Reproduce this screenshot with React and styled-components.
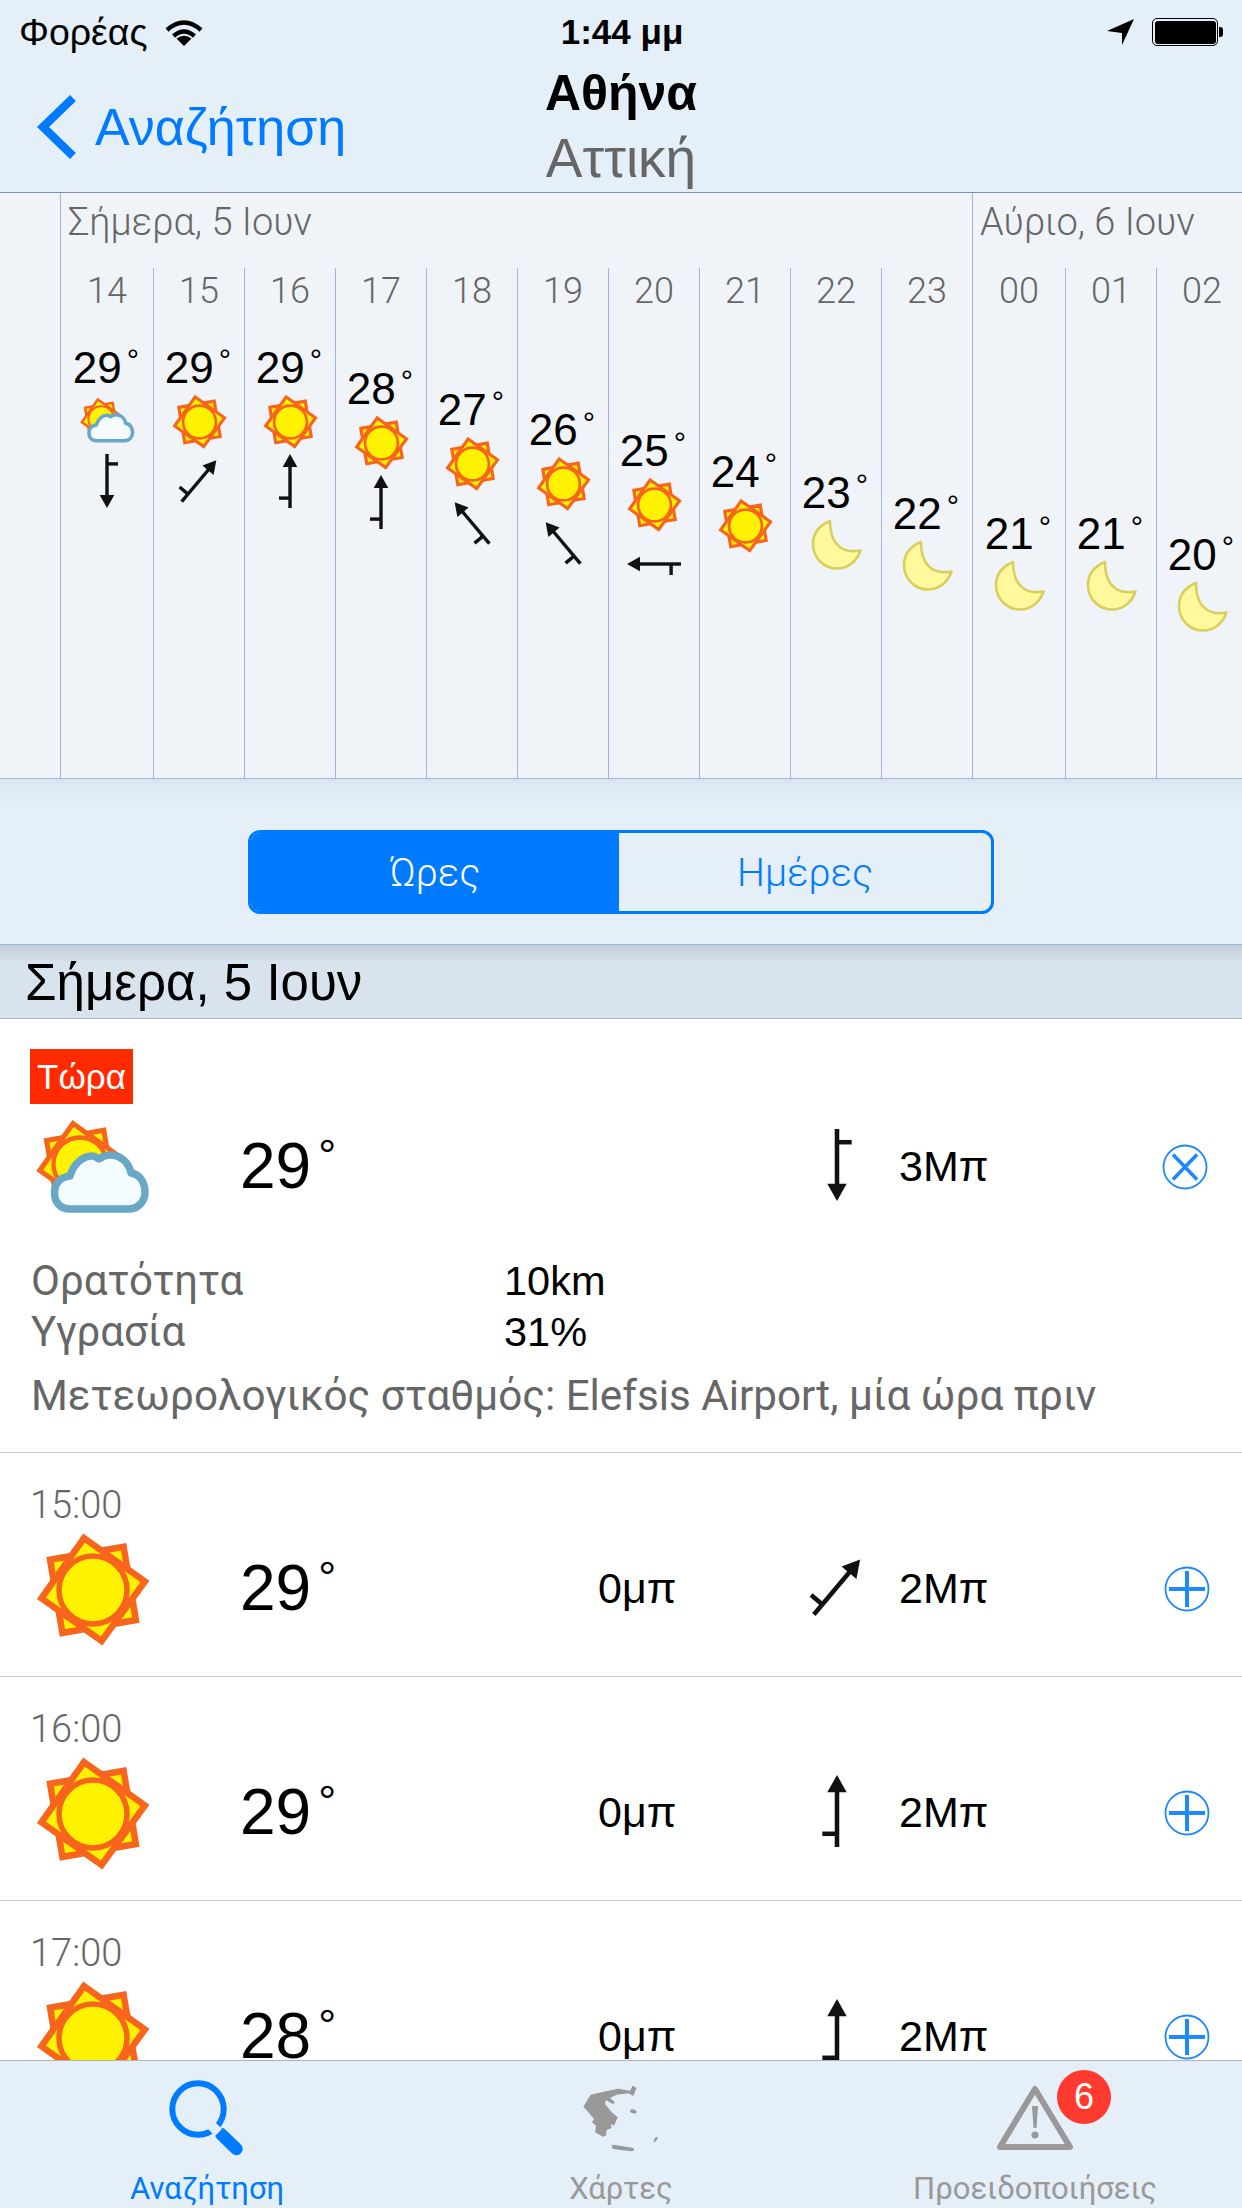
import React from 'react';
import styled, { createGlobalStyle } from 'styled-components';

const SANS = '"Liberation Sans", "Noto Sans", sans-serif';
const LIGHT = 'Roboto, "Liberation Sans", sans-serif';
const BLUE = '#007AFF';
const PALE = '#E5EFF8';
const RULE = '#9DB8D9';

const Global = createGlobalStyle`
  html, body { margin: 0; padding: 0; background: #fff; }
  * { box-sizing: border-box; }
`;

const Screen = styled.div`
  width: 1242px; height: 2208px; overflow: hidden;
  display: flex; flex-direction: column;
  font-family: ${SANS}; color: #000; background: #fff;
`;

/* ---------- header ---------- */
const Header = styled.header`
  flex: none; height: 193px; background: ${PALE};
  border-bottom: 1px solid #7C90AE;
  display: flex; flex-direction: column;
`;
const StatusBar = styled.div`
  height: 64px; padding: 0 17px 0 19px;
  display: grid; grid-template-columns: 1fr auto 1fr; align-items: center;
  font-size: 37.5px; line-height: 64px;
`;
const StatusLeft = styled.div`display: flex; align-items: center; gap: 17px;`;
const StatusTime = styled.div`font-weight: 700; font-size: 35px;`;
const StatusRight = styled.div`display: flex; align-items: center; justify-content: flex-end; gap: 18px;`;
const Battery = styled.div`
  position: relative; width: 66px; height: 28px;
  border: 1.5px solid #000; border-radius: 5px; padding: 1.5px; margin-right: 7px;
  &::before { content: ''; display: block; width: 100%; height: 100%; background: #000; border-radius: 3px; }
  &::after { content: ''; position: absolute; right: -6px; top: 8px; width: 4px; height: 10px; background: #000; border-radius: 0 3px 3px 0; }
`;
const NavBar = styled.nav`
  flex: 1; display: grid; grid-template-columns: 1fr auto 1fr; align-items: start;
`;
const BackLink = styled.div`
  display: flex; align-items: center; gap: 15px; padding: 28px 0 0 36px;
  color: ${BLUE}; font-size: 52px; line-height: 70px;
`;
const TitleBlock = styled.div`
  display: flex; flex-direction: column; align-items: center;
`;
const Title = styled.div`font-size: 50px; font-weight: 700; line-height: 66px; margin-top: -4px;`;
const Subtitle = styled.div`font-size: 55px; line-height: 68px; color: #666; margin-top: -2px;`;

/* ---------- hourly chart ---------- */
const Chart = styled.section`
  flex: none; height: 586px; padding-left: 60px; background: #F0F4F9;
  border-bottom: 1px solid ${RULE};
  display: flex; overflow: hidden;
`;
const DayGroup = styled.div`
  flex: none; width: ${p => p.$width}px; display: flex; flex-direction: column;
  border-left: 1px solid ${RULE};
`;
const DayLabel = styled.div`
  height: 75px; padding-left: 7px;
  font-family: ${LIGHT}; font-weight: 300; font-size: 38px; line-height: 58px; color: #666;
`;
const Hours = styled.div`flex: 1; display: flex;`;
const HourCell = styled.div`
  flex: none; width: ${p => (p.$first ? '92px' : '91px')};
  ${p => (p.$first ? '' : `border-left: 1px solid ${RULE};`)}
  display: flex; flex-direction: column; align-items: center;
`;
const HourLabel = styled.div`
  font-family: ${LIGHT}; font-weight: 300; font-size: 36px; line-height: 46px; color: #666;
`;
const ChartTemp = styled.div`
  font-size: 44px; line-height: 50px; white-space: nowrap;
  margin: ${p => p.$offset}px 0 0 -2px;
`;
const Degree = styled.span`
  margin-left: ${p => p.$gap}px;
  font-size: 0.7em; line-height: 0; vertical-align: 0.38em;
`;
const ChartIconSlot = styled.div`margin-top: 1px; height: 55px;`;
const ChartWind = styled.div`margin-top: 2px; height: 60px;`;

/* ---------- segmented control ---------- */
const SegmentBand = styled.div`
  flex: none; height: 165px; padding-top: 51px;
  background: linear-gradient(#DBE5EF, ${PALE} 28px);
  display: flex; justify-content: center;
`;
const Segmented = styled.div`
  width: 746px; height: 84px; display: grid; grid-template-columns: 368px 1fr;
  border: 3px solid ${BLUE}; border-radius: 12px; overflow: hidden;
`;
const Segment = styled.div`
  display: flex; align-items: center; justify-content: center;
  font-family: ${LIGHT}; font-weight: 300; font-size: 39.5px;
  background: ${p => (p.$active ? BLUE : 'transparent')};
  color: ${p => (p.$active ? '#fff' : BLUE)};
`;

/* ---------- list ---------- */
const List = styled.main`flex: 1; min-height: 0; overflow: hidden; background: #fff;`;
const SectionHeader = styled.div`
  height: 75px; padding-left: 25px;
  border-top: 1px solid ${RULE}; border-bottom: 1px solid ${RULE};
  background: linear-gradient(#C4CED8, #D9E3ED 18px);
  font-size: 51px; line-height: 76px;
`;
const Row = styled.article`
  padding: 30px 0 ${p => (p.$expanded ? '31px' : '32px')};
  border-bottom: 1px solid #C3CBD3;
`;
const NowBadge = styled.div`
  width: 103px; height: 55px; margin-left: 30px;
  background: #FF2A00; color: #fff;
  font-size: 35px; line-height: 55px; text-align: center;
`;
const TimeLabel = styled.div`
  padding-left: 30px;
  font-family: ${LIGHT}; font-weight: 300; font-size: 38px; line-height: 44px; color: #666;
`;
const RowMain = styled.div`
  margin-top: ${p => p.$top}px; height: 110px; padding-left: 36px;
  display: grid; grid-template-columns: 206px 356px 177px 124px 241px 90px;
  align-items: center;
`;
const RowIcon = styled.div`display: flex; align-items: center; height: 110px;`;
const RowTemp = styled.div`font-size: 64px; line-height: 70px; margin: -2px 0 0 -2px;`;
const RowValue = styled.div`font-size: 43px; line-height: 56px; margin-top: -2px;`;
const WindSlot = styled.div`display: flex; justify-content: center; margin-top: -4px;`;
const ActionSlot = styled.div`
  display: flex; justify-content: center;
  margin-left: ${p => p.$shift}px;
`;
const Details = styled.div`margin-top: 33px; padding-left: 31px;`;
const DetailLine = styled.div`
  display: grid; grid-template-columns: 473px 1fr;
  font-size: 41.5px; line-height: 51px;
`;
const DetailName = styled.span`font-family: ${LIGHT}; font-size: 42px; color: #666;`;
const DetailValue = styled.span`color: #000;`;
const Station = styled.div`
  margin-top: 14px; padding-left: 31px;
  font-family: ${LIGHT}; font-size: 42.2px; line-height: 50px; color: #666;
  white-space: nowrap;
`;

/* ---------- tab bar ---------- */
const TabBar = styled.footer`
  flex: none; height: 148px; padding-top: 9px;
  border-top: 1px solid #AEB4BA; background: ${PALE};
  display: grid; grid-template-columns: repeat(3, 1fr);
`;
const Tab = styled.div`
  position: relative;
  display: flex; flex-direction: column; align-items: center;
  color: ${p => (p.$active ? BLUE : '#999')};
`;
const TabIcon = styled.div`
  height: 96px; display: flex; align-items: center; justify-content: center;
`;
const TabLabel = styled.div`
  margin-top: 5px; font-family: ${LIGHT}; font-size: 31px; line-height: 36px; white-space: nowrap;
`;
const CountBadge = styled.div`
  position: absolute; left: 229px; top: 0;
  width: 54px; height: 54px; border-radius: 50%;
  background: #FF3B30; color: #fff;
  font-size: 36px; line-height: 54px; text-align: center;
`;

/* ---------- drawings ---------- */
const Sun = ({ size }) => (
  <svg width={size} height={size} viewBox="-57 -58 114 114" overflow="visible">
    <g fill="#FFF200" stroke="#F7641B" strokeWidth="6.5" strokeLinejoin="miter">
      <polygon points="-42.9,-30.2 30.6,-43.2 42.9,30 -30.6,43" />
      <polygon points="-9,-51.9 51.9,-8.6 8.6,51 -51.6,8.3" />
      <circle cx="0" cy="0" r="34" strokeWidth="5.5" />
    </g>
  </svg>
);

const PartlyCloudy = ({ width, height }) => (
  <svg width={width} height={height} viewBox="0 0 114 110">
    <g transform="translate(44 52) scale(.78)" fill="#FFF200" stroke="#F7641B" strokeWidth="6.5">
      <polygon points="-42.9,-30.2 30.6,-43.2 42.9,30 -30.6,43" />
      <polygon points="-9,-51.9 51.9,-8.6 8.6,51 -51.6,8.3" />
      <circle cx="0" cy="0" r="34" strokeWidth="5.5" />
    </g>
    <path
      transform="translate(0 9)"
      d="M34 88C24 88 18.5 81 18.5 72C18.5 62 25 56 34 55C37 44 46 35 56 35C60 35 61 37 63 38C66 36 70 34 74 34C85 34 93 42 95 52C104 53 109 62 109 71C109 81 102 88 92 88Z"
      fill="#F3FBFF" stroke="#68A8C6" strokeWidth="7.5" strokeLinejoin="round"
    />
  </svg>
);

const Moon = () => (
  <svg width="51" height="51" viewBox="0 0 51 51">
    <path
      d="M19 2C7 7 2 16 2 25C2 39 13 49.5 26 49.5C37 49.5 46 42 49.5 31.5C36 34 19 30 19 2Z"
      fill="#FFF99E" stroke="#D9CF5F" strokeWidth="2.6" strokeLinejoin="round"
    />
  </svg>
);

const Wind = ({ angle, size }) => (
  <svg width={size} height={size} viewBox="-30 -30 60 60">
    <g transform={`rotate(${angle})`} fill="#111" stroke="none">
      <polygon points="0,-27 7.3,-14 -7.3,-14" />
      <rect x="-1.7" y="-15" width="3.4" height="42" />
      <rect x="-11" y="15.4" width="11" height="3.4" />
    </g>
  </svg>
);

const RoundAction = ({ cross }) => (
  <svg width="46" height="46" viewBox="-23 -23 46 46">
    <circle r="21.5" fill="none" stroke="#1E88FF" strokeWidth="1.8" />
    {cross ? (
      <path d="M-12 -12.5L12 12.5M12 -12.5L-12 12.5" stroke="#1E88FF" strokeWidth="3.6" fill="none" />
    ) : (
      <path d="M-18 0H18M0 -18V18" stroke="#1E88FF" strokeWidth="4" fill="none" />
    )}
  </svg>
);

const WifiIcon = () => (
  <svg width="38" height="27" viewBox="0 0 38 27">
    <path d="M2 11Q19 -4 36 11M8.5 17Q19 8 29.5 17" fill="none" stroke="#000" strokeWidth="4.4" />
    <path d="M19 27L11.5 19.5Q19 14 26.5 19.5Z" fill="#000" />
  </svg>
);

const LocationIcon = () => (
  <svg width="27" height="26" viewBox="0 0 27 26">
    <polygon points="27,0 0,12 15,14 15,26" fill="#000" />
  </svg>
);

const Chevron = () => (
  <svg width="44" height="66" viewBox="0 0 44 66">
    <path d="M37 4L7 33L37 62" fill="none" stroke={BLUE} strokeWidth="8.4" />
  </svg>
);

const SearchIcon = () => (
  <svg width="76" height="76" viewBox="0 0 76 76">
    <circle cx="29" cy="29" r="25.7" fill="none" stroke={BLUE} strokeWidth="6" />
    <path d="M52 54L67.5 69" stroke={BLUE} strokeWidth="12.5" strokeLinecap="round" fill="none" />
    <rect x="41" y="44" width="10" height="10" fill={PALE} transform="rotate(45 46 49)" />
  </svg>
);

const GreeceIcon = () => (
  <svg width="110" height="100" viewBox="-12 -8 330 300">
    <g fill="#999">
      <path d="M40 108L62 72L108 62L145 54L180 60L188 45L200 52L190 76L175 68L140 72L120 82L135 95L128 100L108 88L105 100L125 125L143 140L132 165L122 160L125 172L110 178L108 195L98 198L85 190L75 185L78 165L66 155L72 145L55 125Z" />
      <ellipse cx="190" cy="122" rx="10" ry="6" transform="rotate(15 190 122)" />
      <ellipse cx="257" cy="206" rx="4" ry="9" transform="rotate(35 257 206)" />
      <path d="M125 224Q128 220 140 224L190 232L193 238L186 242L150 238L128 234Z" />
    </g>
  </svg>
);

const WarningIcon = () => (
  <svg width="76" height="66" viewBox="0 0 76 66">
    <path d="M38 4L73 62H3Z" fill="none" stroke="#999" strokeWidth="6" strokeLinejoin="round" />
    <path d="M35 21H41L39.5 43H36.5Z" fill="#999" />
    <circle cx="38" cy="50" r="3.6" fill="#999" />
  </svg>
);

/* ---------- data ---------- */
const today = [
  { h: '14', t: 29, icon: 'cloud', wind: 180 },
  { h: '15', t: 29, icon: 'sun', wind: 40 },
  { h: '16', t: 29, icon: 'sun', wind: 0 },
  { h: '17', t: 28, icon: 'sun', wind: 0 },
  { h: '18', t: 27, icon: 'sun', wind: -40 },
  { h: '19', t: 26, icon: 'sun', wind: -40 },
  { h: '20', t: 25, icon: 'sun', wind: -90 },
  { h: '21', t: 24, icon: 'sun' },
  { h: '22', t: 23, icon: 'moon' },
  { h: '23', t: 22, icon: 'moon' },
];
const tomorrow = [
  { h: '00', t: 21, icon: 'moon' },
  { h: '01', t: 21, icon: 'moon' },
  { h: '02', t: 20, icon: 'moon' },
];
const hourly = [
  { time: '15:00', t: 29, wind: 40, speed: '2Μπ' },
  { time: '16:00', t: 29, wind: 0, speed: '2Μπ' },
  { time: '17:00', t: 28, wind: 0, speed: '2Μπ' },
];

const ChartColumn = ({ item, first }) => (
  <HourCell $first={first}>
    <HourLabel>{item.h}</HourLabel>
    <ChartTemp $offset={29 + (29 - item.t) * 20.8}>
      {item.t}<Degree $gap={5}>°</Degree>
    </ChartTemp>
    <ChartIconSlot>
      {item.icon === 'sun' && <Sun size={55} />}
      {item.icon === 'cloud' && <PartlyCloudy width={55} height={53} />}
      {item.icon === 'moon' && <Moon />}
    </ChartIconSlot>
    {item.wind !== undefined && (
      <ChartWind><Wind angle={item.wind} size={60} /></ChartWind>
    )}
  </HourCell>
);

const Day = ({ label, items, width }) => (
  <DayGroup $width={width}>
    <DayLabel>{label}</DayLabel>
    <Hours>
      {items.map((item, i) => <ChartColumn key={item.h} item={item} first={i === 0} />)}
    </Hours>
  </DayGroup>
);

export default function App() {
  return (
    <Screen>
      <Global />
      <Header>
        <StatusBar>
          <StatusLeft>Φορέας <WifiIcon /></StatusLeft>
          <StatusTime>1:44 μμ</StatusTime>
          <StatusRight><LocationIcon /><Battery /></StatusRight>
        </StatusBar>
        <NavBar>
          <BackLink><Chevron />Αναζήτηση</BackLink>
          <TitleBlock>
            <Title>Αθήνα</Title>
            <Subtitle>Αττική</Subtitle>
          </TitleBlock>
        </NavBar>
      </Header>

      <Chart>
        <Day label="Σήμερα, 5 Ιουν" items={today} width={912} />
        <Day label="Αύριο, 6 Ιουν" items={tomorrow} width={300} />
      </Chart>

      <SegmentBand>
        <Segmented>
          <Segment $active>Ώρες</Segment>
          <Segment>Ημέρες</Segment>
        </Segmented>
      </SegmentBand>

      <List>
        <SectionHeader>Σήμερα, 5 Ιουν</SectionHeader>
        <Row $expanded>
          <NowBadge>Τώρα</NowBadge>
          <RowMain $top={8}>
            <RowIcon><PartlyCloudy width={114} height={110} /></RowIcon>
            <RowTemp>29<Degree $gap={7}>°</Degree></RowTemp>
            <div />
            <WindSlot><Wind angle={180} size={80} /></WindSlot>
            <RowValue>3Μπ</RowValue>
            <ActionSlot $shift={0}><RoundAction cross /></ActionSlot>
          </RowMain>
          <Details>
            <DetailLine><DetailName>Ορατότητα</DetailName><DetailValue>10km</DetailValue></DetailLine>
            <DetailLine><DetailName>Υγρασία</DetailName><DetailValue>31%</DetailValue></DetailLine>
          </Details>
          <Station>Μετεωρολογικός σταθμός: Elefsis Airport, μία ώρα πριν</Station>
        </Row>
        {hourly.map(r => (
          <Row key={r.time}>
            <TimeLabel>{r.time}</TimeLabel>
            <RowMain $top={7}>
              <RowIcon><Sun size={114} /></RowIcon>
              <RowTemp>{r.t}<Degree $gap={7}>°</Degree></RowTemp>
              <RowValue>0μπ</RowValue>
              <WindSlot><Wind angle={r.wind} size={80} /></WindSlot>
              <RowValue>{r.speed}</RowValue>
              <ActionSlot $shift={4}><RoundAction /></ActionSlot>
            </RowMain>
          </Row>
        ))}
      </List>

      <TabBar>
        <Tab $active>
          <TabIcon><SearchIcon /></TabIcon>
          <TabLabel>Αναζήτηση</TabLabel>
        </Tab>
        <Tab>
          <TabIcon><GreeceIcon /></TabIcon>
          <TabLabel>Χάρτες</TabLabel>
        </Tab>
        <Tab>
          <TabIcon><WarningIcon /></TabIcon>
          <TabLabel>Προειδοποιήσεις</TabLabel>
          <CountBadge>6</CountBadge>
        </Tab>
      </TabBar>
    </Screen>
  );
}
